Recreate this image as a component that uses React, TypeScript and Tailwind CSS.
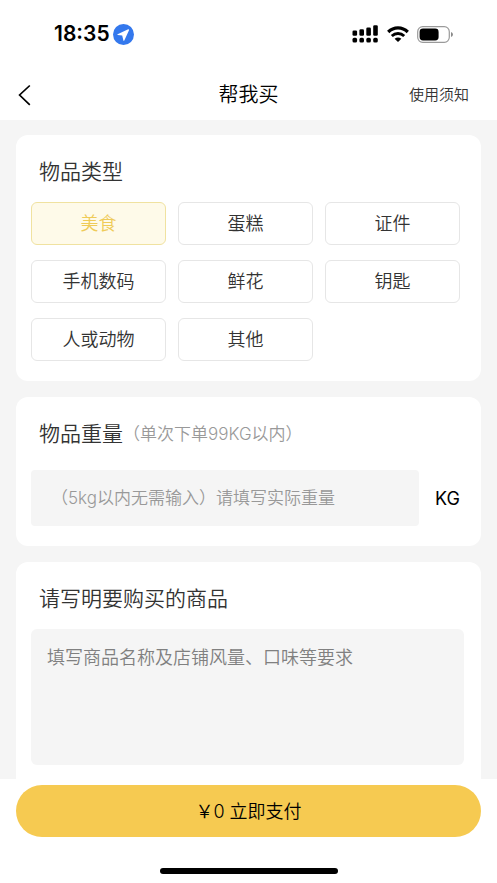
import { useState } from "react";

const CATEGORIES = ["美食", "蛋糕", "证件", "手机数码", "鲜花", "钥匙", "人或动物", "其他"];

function StatusBar() {
    return (
        <div className="flex h-[68px] items-center justify-between pl-[54px] pr-11">
            <div className="flex items-center gap-[3px]">
                <span className="text-[21px] font-semibold leading-6">18:35</span>
                <svg className="h-[21px] w-[21px]" viewBox="0 0 21 21" aria-hidden="true">
                    <circle cx="10.5" cy="10.5" r="10.5" fill="#3478ed" />
                    <path d="M15.2 5.2 4.6 10.2q-.8.6.2.8l4.4.5 1.2 5q.4.8.9.1l4.7-10.4q.2-1.2-.8-1Z" fill="#fff" />
                </svg>
            </div>
            <div className="flex items-center gap-2">
                {/* Dual SIM signal */}
                <svg className="h-[18px] w-[27px]" viewBox="0 0 27 18" aria-hidden="true">
                    <rect x="0.5" y="5.5" width="4.6" height="5.2" rx="1.3" />
                    <rect x="7.4" y="4.2" width="4.6" height="6.5" rx="1.3" />
                    <rect x="14.3" y="2.4" width="4.6" height="8.3" rx="1.3" />
                    <rect x="21.2" y="0.3" width="4.6" height="10.4" rx="1.3" />
                    <rect x="0.5" y="12.8" width="4.6" height="4.8" rx="1.6" />
                    <rect x="7.4" y="12.8" width="4.6" height="4.8" rx="1.6" />
                    <rect x="14.3" y="12.8" width="4.6" height="4.8" rx="1.6" />
                    <rect x="21.2" y="12.8" width="4.6" height="4.8" rx="1.6" />
                </svg>
                <svg className="h-4 w-[22px]" viewBox="0 0 22 16" fill="none" stroke="#000" aria-hidden="true">
                    <path d="M1.2 6C6.8.5 15.2.5 20.8 6" strokeWidth="3.2" />
                    <path d="M4.8 10C8.4 6.8 13.6 6.8 17.2 10" strokeWidth="3" />
                    <path d="M7.6 12.8Q11 10 14.4 12.8L11 16Z" fill="#000" stroke="none" />
                </svg>
                <svg className="h-[17px] w-9" viewBox="0 0 36 17" aria-hidden="true">
                    <rect x="0.7" y="0.7" width="31.6" height="15.6" rx="5" fill="none" stroke="#9a9a9a" strokeWidth="1.2" />
                    <rect x="2.6" y="2.6" width="19" height="11.8" rx="3.4" />
                    <path d="M34 6q2 .8 2 2.5T34 11Z" fill="#8a8a8a" />
                </svg>
            </div>
        </div>
    );
}

export default function App() {
    const [category, setCategory] = useState("美食");

    return (
        <div className="flex min-h-screen flex-col bg-white font-['Inter','Noto_Sans_CJK_SC',sans-serif] font-[350] text-[#333]">
            <header className="text-black">
                <StatusBar />
                <nav className="grid h-[52px] grid-cols-[1fr_auto_1fr] items-center pl-4 pr-7 pt-[2px]">
                    <button type="button" aria-label="返回" className="w-6">
                        <svg className="h-6 w-4" viewBox="0 0 16 24" fill="none" stroke="#000" strokeWidth="1.7" aria-hidden="true">
                            <path d="M13.8 2.5 3.6 12l10.2 9.8" />
                        </svg>
                    </button>
                    <h1 className="pl-3 text-[20px] leading-7">帮我买</h1>
                    <a href="#notice" className="justify-self-end text-[15px] leading-6 text-[#333]">使用须知</a>
                </nav>
            </header>

            <main className="flex flex-col gap-4 bg-[#f5f5f5] px-4 pt-[15px]">
                <section className="rounded-xl bg-white pb-5 pl-[15px] pr-[21px] pt-[22px]">
                    <h2 className="px-2 text-[21px] leading-[30px]">物品类型</h2>
                    <div className="mt-[15px] grid grid-cols-3 gap-x-3 gap-y-[15px]">
                        {CATEGORIES.map((name) => (
                            <button
                                key={name}
                                type="button"
                                aria-pressed={name === category}
                                onClick={() => setCategory(name)}
                                className={
                                    name === category
                                        ? "h-[43px] rounded-md border border-[#f0e2a0] bg-[#fefae9] text-[18px] text-[#efcb58]"
                                        : "h-[43px] rounded-md border border-[#e6e6e6] bg-white text-[18px]"
                                }
                            >
                                {name}
                            </button>
                        ))}
                    </div>
                </section>

                <section className="rounded-xl bg-white pb-5 pl-[15px] pr-[21px] pt-[22px]">
                    <label htmlFor="weight" className="flex items-center px-2 text-[21px] leading-[30px]">
                        物品重量
                        <span className="text-[17px] text-[#999]">（单次下单99KG以内）</span>
                    </label>
                    <div className="mt-[21px] flex items-center gap-4">
                        <input
                            id="weight"
                            inputMode="decimal"
                            placeholder="（5kg以内无需输入）请填写实际重量"
                            className="h-14 min-w-0 flex-1 rounded bg-[#f5f5f5] px-5 text-[17px] outline-none placeholder:text-[#999]"
                        />
                        <span className="text-[18px] font-normal text-black">KG</span>
                    </div>
                </section>

                <section className="rounded-t-xl bg-white pb-[14px] pl-[15px] pr-[17px] pt-[22px]">
                    <label htmlFor="goods" className="block px-2 text-[21px] leading-[30px]">请写明要购买的商品</label>
                    <textarea
                        id="goods"
                        placeholder="填写商品名称及店铺风量、口味等要求"
                        className="mt-[15px] block h-[136px] w-full resize-none rounded-md bg-[#f5f5f5] px-4 py-[15px] text-[18px] leading-7 outline-none placeholder:text-[#808080]"
                    />
                </section>
            </main>

            <footer className="flex flex-1 flex-col items-center justify-between px-4 pb-[9px] pt-[6px]">
                <button type="button" className="h-[52px] w-full rounded-full bg-[#f6ca51] text-[18px] text-black">
                    ￥0 立即支付
                </button>
                <div className="h-[6px] w-[178px] rounded-full bg-black" />
            </footer>
        </div>
    );
}
